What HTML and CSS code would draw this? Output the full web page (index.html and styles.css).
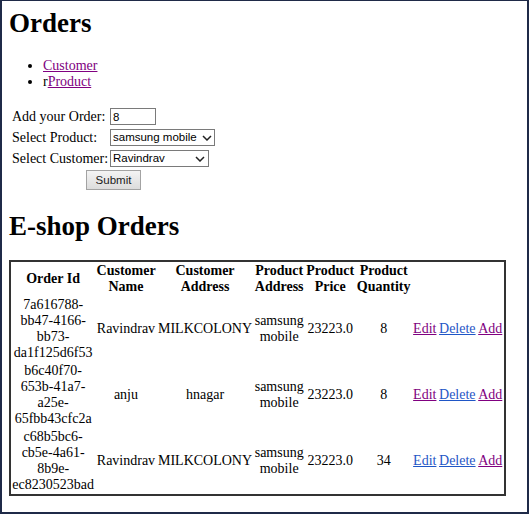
FILE: index.html
```html
<!DOCTYPE html>
<html lang="en">
<head>
<meta charset="utf-8">
<title>Orders</title>
<link rel="stylesheet" href="styles.css">
</head>
<body>
<div class="frame">
  <h1 class="title">Orders</h1>
  <ul class="nav">
    <li><a class="visited" href="#">Customer</a></li>
    <li>r<a class="visited" href="#">Product</a></li>
  </ul>

  <form class="order-form">
    <label class="lbl" for="qty">Add your Order:</label>
    <input id="qty" class="field qty" type="text" value="8">

    <label class="lbl" for="prod">Select Product:</label>
    <span class="select-wrap">
      <select id="prod" class="field select select-prod"><option>samsung mobile</option></select>
      <svg class="chev chev-prod" width="10" height="6" viewBox="0 0 10 6"><path d="M1 1 L5 5 L9 1" fill="none" stroke="#222" stroke-width="1.5"/></svg>
    </span>

    <label class="lbl" for="cust">Select Customer:</label>
    <span class="select-wrap">
      <select id="cust" class="field select select-cust"><option>Ravindrav</option></select>
      <svg class="chev chev-cust" width="10" height="6" viewBox="0 0 10 6"><path d="M1 1 L5 5 L9 1" fill="none" stroke="#222" stroke-width="1.5"/></svg>
    </span>

    <div class="submit-row"><button type="button" class="btn">Submit</button></div>
  </form>

  <h1 class="title section">E-shop Orders</h1>

  <table class="orders">
    <thead>
      <tr>
        <th>Order Id</th>
        <th>Customer Name</th>
        <th>Customer Address</th>
        <th>Product Address</th>
        <th>Product Price</th>
        <th>Product Quantity</th>
      </tr>
    </thead>
    <tbody>
      <tr>
        <td>7a616788-<wbr>bb47-<wbr>4166-<wbr>bb73-<wbr>da1f125d6f53</td>
        <td>Ravindrav</td>
        <td>MILKCOLONY</td>
        <td>samsung mobile</td>
        <td>23223.0</td>
        <td>8</td>
        <td><a class="visited" href="#">Edit</a></td>
        <td><a class="link" href="#">Delete</a></td>
        <td><a class="visited" href="#">Add</a></td>
      </tr>
      <tr>
        <td>b6c40f70-<wbr>653b-<wbr>41a7-<wbr>a25e-<wbr>65fbb43cfc2a</td>
        <td>anju</td>
        <td>hnagar</td>
        <td>samsung mobile</td>
        <td>23223.0</td>
        <td>8</td>
        <td><a class="visited" href="#">Edit</a></td>
        <td><a class="link" href="#">Delete</a></td>
        <td><a class="visited" href="#">Add</a></td>
      </tr>
      <tr>
        <td>c68b5bc6-<wbr>cb5e-<wbr>4a61-<wbr>8b9e-<wbr>ec8230523bad</td>
        <td>Ravindrav</td>
        <td>MILKCOLONY</td>
        <td>samsung mobile</td>
        <td>23223.0</td>
        <td>34</td>
        <td><a class="link" href="#">Edit</a></td>
        <td><a class="link" href="#">Delete</a></td>
        <td><a class="visited" href="#">Add</a></td>
      </tr>
    </tbody>
  </table>
</div>
</body>
</html>
```

FILE: styles.css
```css
html, body {
  margin: 0;
  padding: 0;
  background: #ffffff;
}

body {
  font-family: "Liberation Serif", "Times New Roman", serif;
  font-size: 14px;
  color: #000000;
}

.frame {
  box-sizing: border-box;
  width: 529px;
  height: 514px;
  border-style: solid;
  border-color: #1f2a48;
  border-width: 1px 2px 2px 2px;
  padding: 7px 0 0 7px;
}

.title {
  font-size: 27px;
  line-height: 31px;
  font-weight: bold;
  margin: 0 0 19px 0;
}

.title.section {
  margin: 21px 0 18px 0;
}

.nav {
  margin: 0;
  padding: 0 0 0 34px;
  line-height: 16px;
}

a.visited {
  color: #800080;
}

a.link {
  color: #1f56c6;
}

.order-form {
  display: grid;
  width: max-content;
  grid-template-columns: 98px auto;
  grid-auto-rows: 21px;
  align-items: center;
  padding: 0 3px;
  margin: 16px 0 0 0;
}

.lbl {
  line-height: 16px;
  white-space: nowrap;
}

.field {
  box-sizing: border-box;
  height: 17px;
  margin: 0;
  border: 1px solid #7a7a7a;
  background: #ffffff;
  color: #000000;
  font-family: "Liberation Sans", Arial, sans-serif;
  font-size: 11.5px;
  line-height: 15px;
  justify-self: start;
}

.qty {
  width: 46px;
  padding: 0 2px;
}

.select-wrap {
  position: relative;
  display: block;
  justify-self: start;
  height: 17px;
}

.select {
  -webkit-appearance: none;
  appearance: none;
  padding: 0 0 0 2px;
  border-radius: 0;
  display: block;
}

.select-prod {
  width: 105px;
}

.select-cust {
  width: 99px;
}

.chev {
  position: absolute;
  top: 6px;
}

.chev-prod {
  left: 92px;
}

.chev-cust {
  left: 85px;
}

.submit-row {
  grid-column: 1 / -1;
  justify-self: center;
}

.btn {
  box-sizing: border-box;
  width: 55px;
  height: 20px;
  margin: 0;
  padding: 0;
  border: 1px solid #a3a3a3;
  border-radius: 0;
  background: linear-gradient(#f4f4f4, #dcdcdc);
  color: #1a1a1a;
  font-family: "Liberation Sans", Arial, sans-serif;
  font-size: 11.5px;
  display: block;
}

.orders {
  width: 1px;
  border: 2px solid #333333;
  border-collapse: separate;
  border-spacing: 0;
  font-size: 14px;
  line-height: 16px;
}

.orders th,
.orders td {
  padding: 1px 1.3px;
  text-align: center;
  vertical-align: middle;
}

.orders th {
  font-weight: bold;
}
```
